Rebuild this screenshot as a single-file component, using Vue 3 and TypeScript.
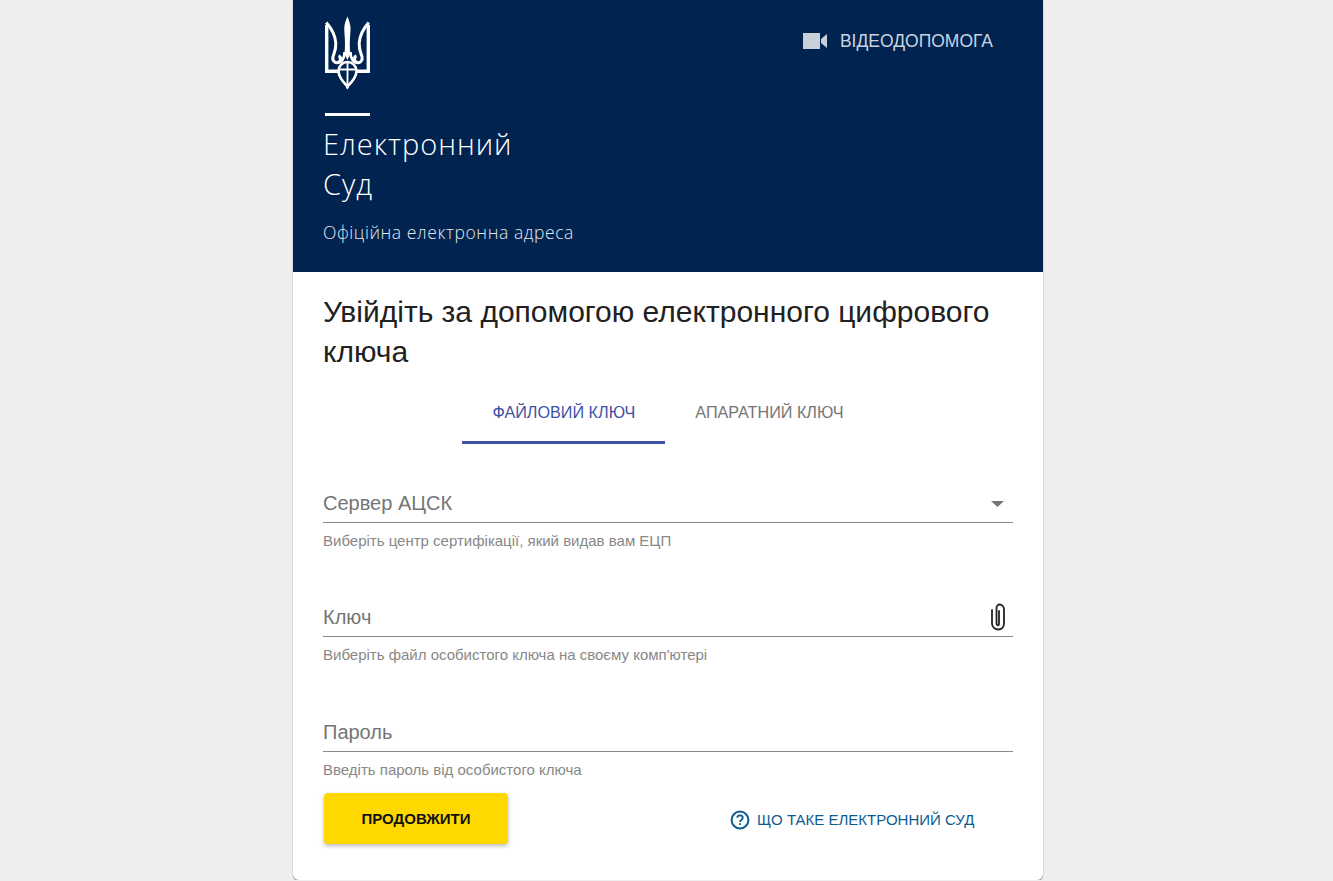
<script setup lang="ts">
const fields = [
  { label: 'Сервер АЦСК', hint: 'Виберіть центр сертифікації, який видав вам ЕЦП', icon: 'arrow' },
  { label: 'Ключ', hint: 'Виберіть файл особистого ключа на своєму комп\'ютері', icon: 'clip' },
  { label: 'Пароль', hint: 'Введіть пароль від особистого ключа', icon: '' },
]
</script>

<template>
  <main class="card">
    <header class="head">
      <div class="brand">
        <svg class="trident" viewBox="0 0 45 75" width="45" height="75" aria-hidden="true">
          <g fill="none" stroke="#fff" stroke-width="3.4" stroke-linejoin="miter">
            <path d="M1.700 10V56.300H14" />
            <path d="M43.300 10V56.300H31" />
            <path d="M1.200 7.500C7 14 10.300 20 10.800 28C11.200 35 9 38.500 8 41.500C7 45.500 10 48.500 13 47.500C16 46.500 16.500 42 13.500 41" stroke-width="3" />
            <path d="M43.800 7.500C38 14 34.700 20 34.200 28C33.800 35 36 38.500 37 41.500C38 45.500 35 48.500 32 47.500C29 46.500 28.500 42 31.500 41" stroke-width="3" />
            <path d="M13 47.500C17 47.500 19.500 43 19.500 37" stroke-width="2.600" />
            <path d="M32 47.500C28 47.500 25.500 43 25.500 37" stroke-width="2.600" />
            <path d="M13.500 56C13.500 51 17.500 47 22.500 47C27.500 47 31.500 51 31.500 56C31.500 62 26.500 67.500 22.500 71.500C18.500 67.500 13.500 62 13.500 56Z" stroke-width="2.600" />
            <path d="M22.500 47V72M14 54.500H31" stroke-width="1.800" />
          </g>
          <path d="M22.400 1.500C20 7 18.800 11 19.400 17C20 25 20.300 32 19.500 39L22.400 45L25.300 39C24.500 32 24.800 25 25.400 17C26 11 24.800 7 22.400 1.500ZM22.400 69L24 72.500L22.400 74.500L20.800 72.500Z" fill="#fff" />
        </svg>
        <div class="rule"></div>
        <h1 class="name">Електронний<br />Суд</h1>
        <p class="tag">Офіційна електронна адреса</p>
      </div>
      <a class="video">
        <svg viewBox="0 0 24 16" width="24" height="16" aria-hidden="true">
          <path d="M0 0H17V16H0ZM18 6L24 1V15L18 10Z" fill="#c8d0da" />
        </svg>
        <span>ВІДЕОДОПОМОГА</span>
      </a>
    </header>

    <section class="body">
      <h2 class="title">Увійдіть за допомогою електронного цифрового ключа</h2>
      <nav class="tabs">
        <span class="tab active">ФАЙЛОВИЙ КЛЮЧ</span>
        <span class="tab">АПАРАТНИЙ КЛЮЧ</span>
      </nav>
      <div class="fields">
        <div v-for="f in fields" :key="f.label" class="field">
          <div class="control">
            <span class="label">{{ f.label }}</span>
            <svg v-if="f.icon === 'arrow'" class="arrow" viewBox="0 0 13 6" width="13" height="6" aria-hidden="true">
              <path d="M0 0H13L6.500 6Z" fill="#757575" />
            </svg>
            <svg v-else-if="f.icon === 'clip'" class="clip" viewBox="0 0 16 28" width="16" height="28" aria-hidden="true">
              <path d="M9 8V20C9 21.500 8.500 22.300 8 22.300C7.300 22.300 6.500 21.500 6.500 20V5.500C6.500 3 8 1.500 9.500 1.500C12 1.500 14 3.500 14 6.500V20.500C14 24 11.500 26.500 8.500 26.500C5 26.500 2 24 2 20.500V7" fill="none" stroke="#222" stroke-width="1.800" stroke-linecap="round" />
            </svg>
          </div>
          <p class="hint">{{ f.hint }}</p>
        </div>
      </div>
      <div class="actions">
        <button class="go" type="button">ПРОДОВЖИТИ</button>
        <a class="what">
          <svg viewBox="0 0 20 20" width="20" height="20" aria-hidden="true">
            <circle cx="10" cy="10" r="8.400" fill="none" stroke="#0d5c91" stroke-width="2" />
            <path d="M7.200 7.800C7.300 6.200 8.500 5.300 10 5.300C11.600 5.300 12.800 6.300 12.800 7.700C12.800 9.700 10 9.700 10 12" fill="none" stroke="#0d5c91" stroke-width="1.800" />
            <rect x="9.100" y="13.200" width="1.800" height="1.800" fill="#0d5c91" />
          </svg>
          <span>ЩО ТАКЕ ЕЛЕКТРОННИЙ СУД</span>
        </a>
      </div>
    </section>
  </main>
</template>

<style>
html, body { background: #eeeeee; margin: 0; }
</style>

<style scoped>
.card {
  width: 750px;
  height: 880px;
  margin-left: 293px;
  display: flex;
  flex-direction: column;
  background: #fff;
  border-radius: 0 0 6px 6px;
  box-shadow: 0 1px 1px rgba(0, 0, 0, 0.4), 0 0 2px rgba(0, 0, 0, 0.15);
  font-family: "Liberation Sans", Arial, sans-serif;
}
.head {
  height: 272px;
  box-sizing: border-box;
  padding: 15px 50px 0 30px;
  background: #00234f;
  display: flex;
  justify-content: space-between;
  align-items: flex-start;
  color: #fff;
}
.trident { display: block; margin-left: 2px; }
.rule { width: 45px; height: 3px; margin: 23px 0 0 2px; background: #fff; }
.name {
  margin: 8px 0 0;
  font: 300 29px/40px "Open Sans", sans-serif;
  letter-spacing: 1px;
}
.tag {
  margin: 16px 0 0;
  font: 300 17.500px/24px "Open Sans", sans-serif;
  letter-spacing: 0.6px;
  color: #e3e8f0;
}
.video {
  margin-top: 15px;
  display: flex;
  align-items: center;
  gap: 13px;
  font-size: 17.500px;
  line-height: 22px;
  color: #c8d3e2;
}
.body { padding: 20px 30px 0; }
.title {
  margin: 0;
  font-size: 30px;
  font-weight: 400;
  line-height: 40px;
  color: #212121;
}
.tabs {
  display: flex;
  justify-content: center;
  margin-top: 18px;
}
.tab {
  padding: 12px 30px 19px;
  border-bottom: 3px solid transparent;
  font-size: 16.200px;
  line-height: 20px;
  color: #757575;
}
.tab.active { color: #3f51a5; border-bottom-color: #3f51a5; }
.fields { margin-top: 38px; display: flex; flex-direction: column; gap: 46px; }
.field:last-child { margin-top: 1px; }
.control {
  height: 41px;
  box-sizing: border-box;
  border-bottom: 1px solid #8a8a8a;
  display: flex;
  align-items: center;
  justify-content: space-between;
  color: #757575;
  font-size: 20px;
}
.label { margin-top: 2px; }
.arrow { margin-right: 9px; margin-top: 4px; }
.clip { margin-right: 7px; margin-top: 2px; }
.hint { margin: 9px 0 0; font-size: 15px; line-height: 18px; color: #888; }
.actions {
  margin-top: 14px;
  display: flex;
  align-items: center;
  padding-left: 1px;
}
.go {
  width: 184px;
  height: 51px;
  border: 0;
  border-radius: 4px;
  background: #ffd800;
  box-shadow: 0 2px 4px rgba(0, 0, 0, 0.28);
  color: #111;
  font: 700 15px "Liberation Sans", sans-serif;
}
.what {
  margin-left: 222px;
  margin-top: 2px;
  display: flex;
  align-items: center;
  gap: 7px;
  color: #0d5c91;
  font-size: 15px;
}
</style>
